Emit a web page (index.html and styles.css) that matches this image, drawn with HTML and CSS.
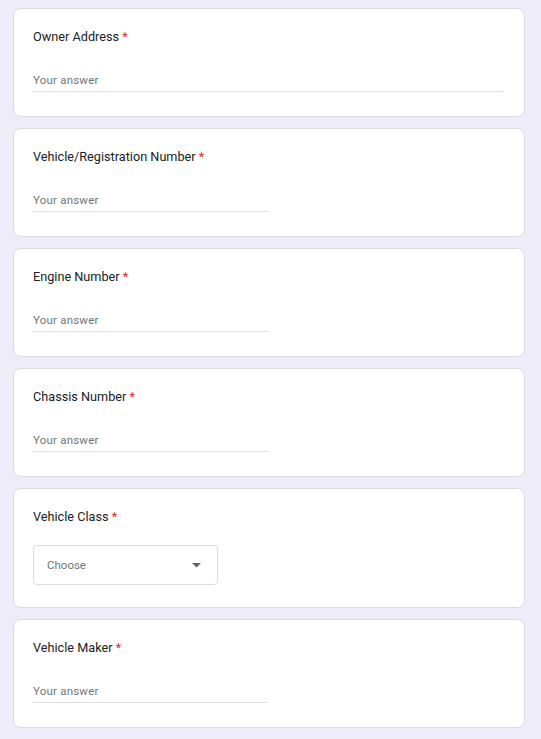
FILE: index.html
```html
<!DOCTYPE html>
<html lang="en">
<head>
    <meta charset="UTF-8">
    <meta name="viewport" content="width=device-width, initial-scale=1.0">
    <title>Vehicle Details</title>
    <link rel="stylesheet" href="styles.css">
</head>
<body>

    <div class="form">
        <div class="question">
            <div class="question-title">Owner Address <span class="required">*</span></div>
            <div class="answer answer-wide">Your answer</div>
        </div>

        <div class="question">
            <div class="question-title">Vehicle/Registration Number <span class="required">*</span></div>
            <div class="answer">Your answer</div>
        </div>

        <div class="question">
            <div class="question-title">Engine Number <span class="required">*</span></div>
            <div class="answer">Your answer</div>
        </div>

        <div class="question">
            <div class="question-title">Chassis Number <span class="required">*</span></div>
            <div class="answer">Your answer</div>
        </div>

        <div class="question question-select">
            <div class="question-title">Vehicle Class <span class="required">*</span></div>
            <div class="dropdown">
                <span>Choose</span>
                <svg class="dropdown-arrow" width="9" height="5" viewBox="0 0 9 5">
                    <path d="M0 0 L9 0 L4.5 4.5 Z" fill="#5f6368"/>
                </svg>
            </div>
        </div>

        <div class="question">
            <div class="question-title">Vehicle Maker <span class="required">*</span></div>
            <div class="answer">Your answer</div>
        </div>

        <div class="question"></div>
    </div>

</body>
</html>
```

FILE: styles.css
```css
body {
    font-family: Roboto, 'Liberation Sans', Arial, sans-serif;
    background-color: #eeecf9;
    color: #202124;
    margin: 0;
    padding: 8px 16px 0 13px;
    overflow: hidden;
}

.form {
    display: flex;
    flex-direction: column;
    gap: 11px;
    width: 512px;
}

.question {
    background-color: #fff;
    border: 1px solid #dadce0;
    border-radius: 8px;
    padding: 19px 19px 24px;
    min-height: 60px;
}

.question-title {
    font-size: 12.7px;
    line-height: 18px;
}

.required {
    color: #d93025;
}

.answer {
    margin-top: 22px;
    width: 235px;
    height: 23px;
    line-height: 24px;
    font-size: 11.5px;
    color: #70757a;
    border-bottom: 1px solid #e0e0e0;
    letter-spacing: 0.2px;
}

.answer-wide {
    width: 470px;
}

.question-select {
    padding-bottom: 22px;
}

.dropdown {
    margin-top: 19px;
    width: 154px;
    height: 38px;
    border: 1px solid #dadce0;
    border-radius: 4px;
    display: flex;
    align-items: center;
    justify-content: space-between;
    padding: 0 16px 0 13px;
    font-size: 11.5px;
    color: #70757a;
}

.dropdown-arrow {
    display: block;
}
```
